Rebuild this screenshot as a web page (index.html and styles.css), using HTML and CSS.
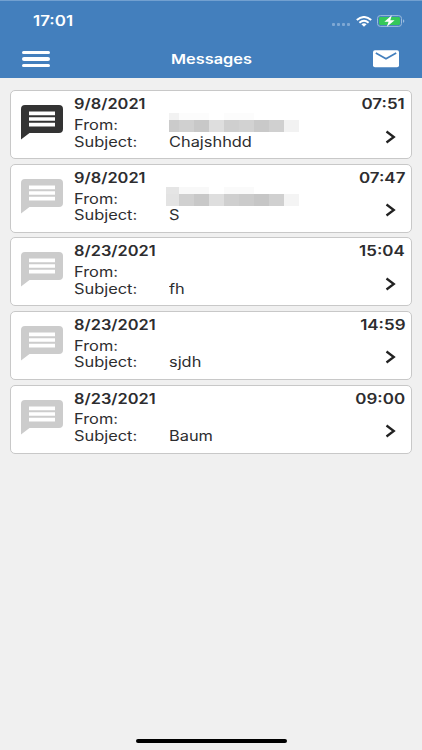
FILE: index.html
```html
<!DOCTYPE html>
<html lang="en">
<head>
  <meta charset="UTF-8" />
  <meta name="viewport" content="width=device-width, initial-scale=1.0"/>
  <title>Messages</title>
  <link rel="stylesheet" href="styles.css">
</head>
<body>
  <svg class="symbols" width="0" height="0">
    <symbol id="chat" viewBox="0 0 42 35">
      <path fill="currentColor" fill-rule="evenodd" d="M4 0h34q4 0 4 4v20q0 4-4 4H8.5L0 34.5V4q0-4 4-4zM8 6.6v3.7h26V6.6zM8 12.2v3.6h26v-3.6zM8 17.8v3.7h26v-3.7z"/>
    </symbol>
    <symbol id="chevron" viewBox="0 0 11 14">
      <path fill="none" stroke="#222" stroke-width="2.3" d="M1.5 1.5L8.8 7l-7.3 5.5"/>
    </symbol>
  </svg>

  <header>
    <div class="status-bar">
      <span class="clock">17:01</span>
      <div class="status-icons">
        <div class="signal"><i></i><i></i><i></i><i></i></div>
        <svg class="wifi" width="16" height="11" viewBox="0 0 16 11">
          <g fill="none" stroke="#fff" stroke-width="2">
            <path d="M.8 4.1Q8-2.1 15.2 4.1"/>
            <path d="M3.4 6.7Q8 2.8 12.6 6.7"/>
          </g>
          <path fill="#fff" d="M5.4 8.3Q8 6.3 10.6 8.3L8 10.8z"/>
        </svg>
        <svg class="battery" width="28" height="12" viewBox="0 0 28 12">
          <rect x=".5" y=".6" width="24" height="10.8" rx="2.8" fill="none" stroke="#9cbbdd"/>
          <rect x="2" y="2" width="21" height="8" rx="1.4" fill="#35c75a"/>
          <path d="M26 4.2q1.3.4 1.3 1.8T26 7.8z" fill="#9cbbdd"/>
          <path d="M14.8.3L7.4 6.8h4.2l-1.8 5 7.8-6.6h-4.3z" fill="#fff"/>
        </svg>
      </div>
    </div>
    <div class="nav-bar">
      <div class="menu"><i></i><i></i><i></i></div>
      <h1><span>Messages</span></h1>
      <svg class="mail" width="26" height="18" viewBox="0 0 26 18">
        <rect y=".2" width="26" height="17" rx="2" fill="#fff"/>
        <path d="M2.8 3L13 8.7 23.2 3" fill="none" stroke="#437fbd" stroke-width="1.7"/>
      </svg>
    </div>
  </header>

  <main>
    <article class="message unread">
      <svg class="chat"><use href="#chat"/></svg>
      <div class="details">
        <div class="top"><b class="date">9/8/2021</b><b class="time">07:51</b></div>
        <div class="line"><span class="label">From:</span><div class="redacted"></div></div>
        <div class="line"><span class="label">Subject:</span><span class="value">Chajshhdd</span></div>
      </div>
      <svg class="chevron"><use href="#chevron"/></svg>
    </article>
    <article class="message">
      <svg class="chat"><use href="#chat"/></svg>
      <div class="details">
        <div class="top"><b class="date">9/8/2021</b><b class="time">07:47</b></div>
        <div class="line"><span class="label">From:</span><div class="redacted wide"></div></div>
        <div class="line"><span class="label">Subject:</span><span class="value">S</span></div>
      </div>
      <svg class="chevron"><use href="#chevron"/></svg>
    </article>
    <article class="message">
      <svg class="chat"><use href="#chat"/></svg>
      <div class="details">
        <div class="top"><b class="date">8/23/2021</b><b class="time">15:04</b></div>
        <div class="line"><span class="label">From:</span></div>
        <div class="line"><span class="label">Subject:</span><span class="value">fh</span></div>
      </div>
      <svg class="chevron"><use href="#chevron"/></svg>
    </article>
    <article class="message">
      <svg class="chat"><use href="#chat"/></svg>
      <div class="details">
        <div class="top"><b class="date">8/23/2021</b><b class="time">14:59</b></div>
        <div class="line"><span class="label">From:</span></div>
        <div class="line"><span class="label">Subject:</span><span class="value">sjdh</span></div>
      </div>
      <svg class="chevron"><use href="#chevron"/></svg>
    </article>
    <article class="message">
      <svg class="chat"><use href="#chat"/></svg>
      <div class="details">
        <div class="top"><b class="date">8/23/2021</b><b class="time">09:00</b></div>
        <div class="line"><span class="label">From:</span></div>
        <div class="line"><span class="label">Subject:</span><span class="value">Baum</span></div>
      </div>
      <svg class="chevron"><use href="#chevron"/></svg>
    </article>
  </main>

  <div class="home-indicator"></div>
</body>
</html>
```
FILE: styles.css
```css
:root {
  --bg: #f0f0f0;
  --blue: #437fbd;
  --text: #2d2d2f;
  --border: #c8c8c8;
  --stretch: scaleX(1.17);
  --stretch-wide: scaleX(1.21);
}

* {
  margin: 0;
  padding: 0;
  box-sizing: border-box;
}

body {
  background: var(--bg);
  font-family: Inter, "Liberation Sans", sans-serif;
  color: var(--text);
  display: flex;
  flex-direction: column;
  height: 750px;
  overflow: hidden;
}

.symbols {
  position: absolute;
}

header {
  height: 78px;
  background: var(--blue);
  border-top: 1px solid #72a0d0;
  color: #fff;
}

.status-bar {
  display: flex;
  justify-content: space-between;
  height: 39px;
  padding: 11px 17px 0 33px;
}

.clock {
  font-size: 14px;
  font-weight: 600;
  line-height: 18px;
  transform: var(--stretch-wide);
  transform-origin: left;
}

.status-icons {
  display: flex;
  align-items: center;
  height: 18px;
}

.signal {
  display: flex;
  gap: 2px;
  margin: 7px 6px 0 0;
}

.signal i {
  width: 3px;
  height: 3px;
  border-radius: 1px;
  background: #7fa8d4;
}

.wifi {
  margin-right: 5px;
}

.nav-bar {
  display: flex;
  justify-content: space-between;
  align-items: center;
  height: 38px;
  padding: 0 23px 0 22px;
}

.menu {
  display: flex;
  flex-direction: column;
  gap: 3px;
  width: 28px;
}

.menu i {
  height: 3.5px;
  border-radius: 2px;
  background: #fff;
}

h1 {
  font-size: 13.5px;
  font-weight: 600;
  line-height: 18px;
}

h1 span {
  display: inline-block;
  transform: var(--stretch-wide);
}

main {
  flex: 1;
  display: flex;
  flex-direction: column;
  gap: 4.6px;
  padding: 12.3px 10px;
}

.message {
  display: flex;
  height: 69px;
  padding: 4px 6px 0 10px;
  background: #fff;
  border: 1px solid var(--border);
  border-radius: 5px;
}

.chat {
  width: 42px;
  height: 35px;
  margin-top: 10px;
  color: #ccc;
}

.unread .chat {
  color: #333;
}

.details {
  flex: 1;
  margin-left: 11px;
}

.top {
  display: flex;
  justify-content: space-between;
  height: 20.7px;
  font-size: 14px;
  line-height: 18px;
}

.top b {
  font-weight: 600;
  transform: var(--stretch);
}

.date {
  transform-origin: left;
}

.top .time {
  transform: var(--stretch-wide);
  transform-origin: right;
}

.line {
  display: flex;
  height: 16.7px;
  font-size: 14px;
  line-height: 17px;
}

.label {
  width: 95px;
}

.label,
.value {
  transform: var(--stretch);
  transform-origin: left;
}

.redacted {
  width: 130px;
  height: 19px;
  margin-top: -3px;
  background:
    linear-gradient(90deg, #f2f2f2 10px, #fcfcfc 10px 40px, #fff 40px 55px, #fcfcfc 55px 85px, #fff 85px) 0 0 / 100% 7px no-repeat,
    linear-gradient(90deg, #cbcbcb 10px, #d0d0d0 10px 25px, #c8c8c8 25px 40px, #dedede 40px 55px, #cfcfcf 55px 70px, #d2d2d2 70px 85px, #c9c9c9 85px 100px, #d0d0d0 100px 115px, #f2f2f2 115px) 0 7px / 100% 12px no-repeat;
}

.redacted.wide {
  width: 133px;
  margin-left: -3px;
  background:
    linear-gradient(90deg, #e5e5e5 13px, #f8f8f8 13px 43px, #fff 43px 58px, #fafafa 58px 88px, #fff 88px) 0 0 / 100% 7px no-repeat,
    linear-gradient(90deg, #e3e3e3 13px, #d0d0d0 13px 28px, #c8c8c8 28px 43px, #dedede 43px 58px, #cfcfcf 58px 73px, #cbcbcb 73px 88px, #c6c6c6 88px 103px, #d0d0d0 103px 118px, #f4f4f4 118px) 0 7px / 100% 12px no-repeat;
}

.chevron {
  width: 11px;
  height: 14px;
  margin: 34.4px 9px 0 -20px;
}

.home-indicator {
  width: 151px;
  height: 4px;
  margin: 0 auto 7px;
  border-radius: 2px;
  background: #000;
}
```
